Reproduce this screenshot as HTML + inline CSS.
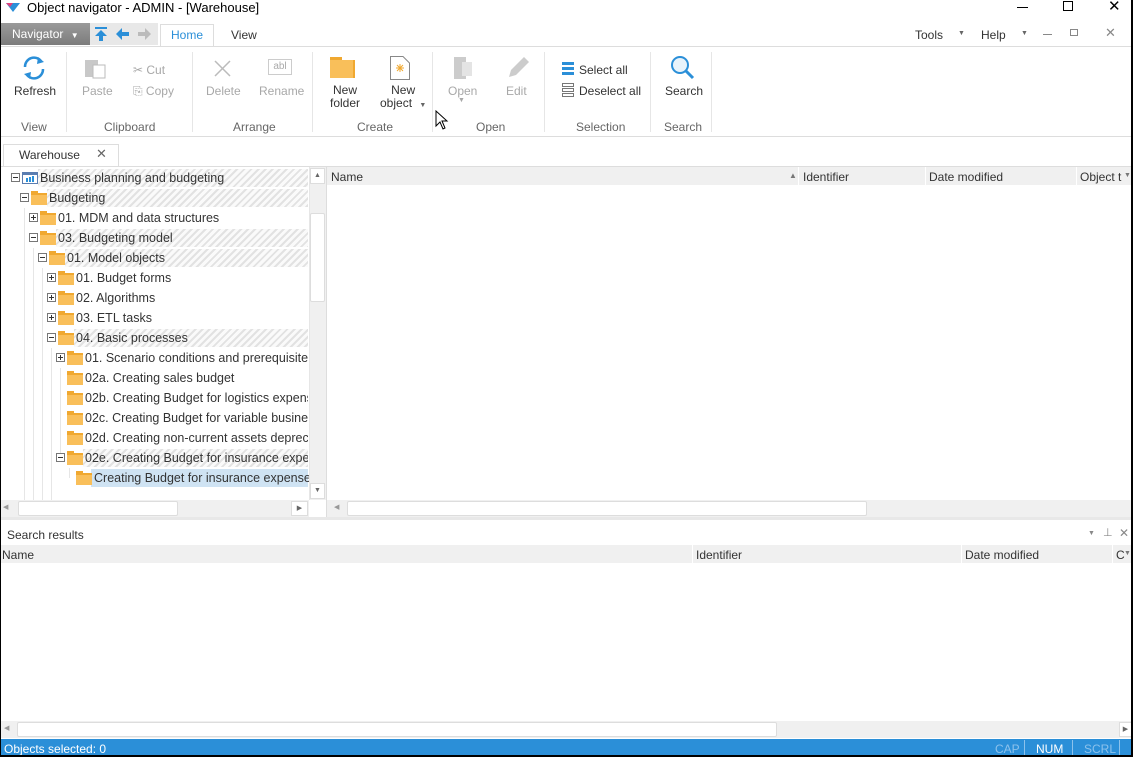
<!DOCTYPE html>
<html><head><meta charset="utf-8"><style>
*{margin:0;padding:0;box-sizing:border-box}
body{width:1133px;height:757px;overflow:hidden;background:#fff;font-family:"Liberation Sans",sans-serif;font-size:12px;color:#333;position:relative}
.a{position:absolute;white-space:nowrap}
.g{color:#a8a8a8}
.lbl{color:#666}
.hat{background:repeating-linear-gradient(135deg,#e2e2e2 0 2px,#fafafa 2px 5px)}
.exp{position:absolute;width:9px;height:9px;border:1px solid #777;background:#fff}
.exp:before{content:"";position:absolute;left:1px;top:3px;width:5px;height:1px;background:#333}
.exp.p:after{content:"";position:absolute;left:3px;top:1px;width:1px;height:5px;background:#333}
.fd{position:absolute;width:16px;height:12px;background:#f9bf5a;border-top:2px solid #f0a830}
.fd:before{content:"";position:absolute;left:0;top:-4px;width:7px;height:3px;background:#f0a830}
.vl{position:absolute;width:1px;background:#e6e6e6}
.tx{position:absolute;height:20px;line-height:20px;white-space:nowrap;overflow:hidden;font-size:12.5px}
</style></head><body>
<svg class="a" style="left:6px;top:3px" width="14" height="10"><path d="M0 0 L14 0 L7 9Z" fill="#2b8fd8"/><path d="M0 0 L7 0 L4 4Z" fill="#e0407a"/></svg>
<div class="a" style="left:27px;top:0;font-size:13px;color:#000;line-height:16px">Object navigator - ADMIN - [Warehouse]</div>
<div class="a" style="left:1017px;top:7px;width:11px;height:1px;background:#000"></div>
<div class="a" style="left:1063px;top:1px;width:10px;height:10px;border:1px solid #000"></div>
<div class="a" style="left:1108px;top:-3px;font-size:15px;color:#000">✕</div>
<div class="a" style="left:0;top:23px;width:90px;height:22px;background:linear-gradient(#9a9a9a,#7c7c7c);color:#fff;line-height:22px;padding-left:12px">Navigator <span style="font-size:8px;margin-left:4px">▼</span></div>
<div class="a" style="left:90px;top:23px;width:68px;height:22px;background:#e8e8e8"></div>
<svg class="a" style="left:94px;top:27px" width="60" height="14"><path d="M1 1H13" stroke="#2b8fd8" stroke-width="2"/><path d="M7 3L1 9H5V14H9V9H13Z" fill="#2b8fd8"/><path d="M22 7L28 1V5H35V9H28V13Z" fill="#2b8fd8"/><path d="M57 7L51 1V5H44V9H51V13Z" fill="#bbb"/></svg>
<div class="a" style="left:160px;top:24px;width:54px;height:23px;border:1px solid #ddd;border-bottom:none;background:#fff;color:#2b8fd8;text-align:center;line-height:21px">Home</div>
<div class="a" style="left:231px;top:28px;color:#333">View</div>
<div class="a" style="left:915px;top:28px">Tools</div><div class="a" style="left:958px;top:30px;font-size:7px;color:#666">▼</div>
<div class="a" style="left:981px;top:28px">Help</div><div class="a" style="left:1021px;top:30px;font-size:7px;color:#666">▼</div>
<div class="a" style="left:1043px;top:34px;width:9px;height:1px;background:#888"></div>
<div class="a" style="left:1070px;top:29px;width:8px;height:7px;border:1px solid #888"></div>
<div class="a" style="left:1105px;top:25px;color:#888;font-size:13px">✕</div>
<div class="a" style="left:0;top:46px;width:1133px;height:1px;background:#ddd"></div>
<div class="a" style="left:0;top:136px;width:1133px;height:1px;background:#ddd"></div>
<div class="a" style="left:66px;top:52px;width:1px;height:80px;background:#e6e6e6"></div>
<div class="a" style="left:192px;top:52px;width:1px;height:80px;background:#e6e6e6"></div>
<div class="a" style="left:312px;top:52px;width:1px;height:80px;background:#e6e6e6"></div>
<div class="a" style="left:432px;top:52px;width:1px;height:80px;background:#e6e6e6"></div>
<div class="a" style="left:544px;top:52px;width:1px;height:80px;background:#e6e6e6"></div>
<div class="a" style="left:650px;top:52px;width:1px;height:80px;background:#e6e6e6"></div>
<div class="a" style="left:711px;top:52px;width:1px;height:80px;background:#e6e6e6"></div>
<svg class="a" style="left:21px;top:55px" width="26" height="26"><path d="M4 12A9 9 0 0 1 20 6" fill="none" stroke="#2b8fd8" stroke-width="2.5"/><path d="M22 14A9 9 0 0 1 6 20" fill="none" stroke="#2b8fd8" stroke-width="2.5"/><path d="M17 2L23 7L16 9Z" fill="#2b8fd8"/><path d="M9 24L3 19L10 17Z" fill="#2b8fd8"/></svg>
<div class="a" style="left:14px;top:84px">Refresh</div>
<svg class="a" style="left:85px;top:57px" width="22" height="22"><rect x="0" y="3" width="13" height="17" fill="#c8c8c8"/><rect x="8" y="8" width="12" height="13" fill="#fff" stroke="#bbb"/></svg>
<div class="a g" style="left:82px;top:84px">Paste</div>
<div class="a g" style="left:133px;top:63px">✂ Cut</div>
<div class="a g" style="left:133px;top:84px">⎘ Copy</div>
<svg class="a" style="left:214px;top:60px" width="18" height="18"><path d="M1 1L16 16M16 1L1 16" stroke="#bbb" stroke-width="1.5"/></svg>
<div class="a g" style="left:206px;top:84px">Delete</div>
<div class="a" style="left:268px;top:59px;width:24px;height:16px;border:1px solid #ccc;color:#aaa;font-size:10px;text-align:center;line-height:14px">abl</div>
<div class="a g" style="left:259px;top:84px">Rename</div>
<svg class="a" style="left:330px;top:57px" width="26" height="22"><rect x="0" y="0" width="12" height="4" fill="#f0a830"/><rect x="0" y="3" width="25" height="18" fill="#f9bf5a"/><rect x="23" y="3" width="2" height="18" fill="#f0a830"/></svg>
<div class="a" style="left:330px;top:84px;color:#333;text-align:center;line-height:13px">New<br>folder</div>
<svg class="a" style="left:390px;top:56px" width="20" height="24"><path d="M0.5 0.5H13L19.5 7V23.5H0.5Z" fill="#fff" stroke="#888"/><path d="M7 9L13 15M13 9L7 15M10 8V16M6 12H14" stroke="#f0a830"/></svg>
<div class="a" style="left:380px;top:84px;color:#333;text-align:center;line-height:13px">New<br>object <span style="font-size:7px;color:#666;margin-left:4px">▼</span></div>
<svg class="a" style="left:452px;top:56px" width="22" height="24"><rect x="2" y="1" width="12" height="22" fill="#ccc"/><rect x="10" y="6" width="10" height="14" fill="#e4e4e4"/></svg>
<div class="a g" style="left:448px;top:84px">Open</div><div class="a g" style="left:458px;top:97px;font-size:7px">▼</div>
<svg class="a" style="left:505px;top:55px" width="26" height="26"><path d="M4 22L6 15L19 2L24 7L11 20Z" fill="#ccc"/></svg>
<div class="a g" style="left:506px;top:84px">Edit</div>
<svg class="a" style="left:562px;top:62px" width="12" height="36"><rect x="0" y="0" width="12" height="3" fill="#2b8fd8"/><rect x="0" y="5" width="12" height="3" fill="#2b8fd8"/><rect x="0" y="10" width="12" height="3" fill="#2b8fd8"/><rect x="0.5" y="21.5" width="11" height="3" fill="none" stroke="#777"/><rect x="0.5" y="26.5" width="11" height="3" fill="none" stroke="#777"/><rect x="0.5" y="31.5" width="11" height="3" fill="none" stroke="#777"/></svg>
<div class="a" style="left:579px;top:63px">Select all</div>
<div class="a" style="left:579px;top:84px">Deselect all</div>
<svg class="a" style="left:669px;top:55px" width="26" height="26"><circle cx="11" cy="10" r="8" fill="#e8f3fb" stroke="#2b8fd8" stroke-width="2"/><path d="M17 16L24 23" stroke="#2b8fd8" stroke-width="3"/></svg>
<div class="a" style="left:665px;top:84px">Search</div>
<div class="a lbl" style="left:21px;top:120px">View</div>
<div class="a lbl" style="left:104px;top:120px">Clipboard</div>
<div class="a lbl" style="left:233px;top:120px">Arrange</div>
<div class="a lbl" style="left:357px;top:120px">Create</div>
<div class="a lbl" style="left:476px;top:120px">Open</div>
<div class="a lbl" style="left:576px;top:120px">Selection</div>
<div class="a lbl" style="left:664px;top:120px">Search</div>
<svg class="a" style="left:435px;top:110px" width="14" height="20"><path d="M1 1V16L5 12L8 19L10 18L7 11H12Z" fill="#fff" stroke="#000"/></svg>
<div class="a" style="left:3px;top:144px;width:116px;height:23px;border:1px solid #ddd;border-bottom:none;background:#fff"></div>
<div class="a" style="left:19px;top:148px;color:#333">Warehouse</div>
<div class="a" style="left:96px;top:146px;color:#666;font-size:13px">✕</div>
<div class="a" style="left:0;top:166px;width:1133px;height:1px;background:#ddd"></div>
<div class="vl" style="left:24px;top:208px;height:295px"></div>
<div class="vl" style="left:33px;top:248px;height:255px"></div>
<div class="vl" style="left:42px;top:268px;height:235px"></div>
<div class="vl" style="left:51px;top:348px;height:155px"></div>
<div class="vl" style="left:60px;top:368px;height:85px"></div>
<div class="vl" style="left:69px;top:468px;height:10px"></div>
<div class="a hat" style="left:38px;top:169px;width:270px;height:18px"></div>
<div class="a hat" style="left:47px;top:189px;width:261px;height:18px"></div>
<div class="a hat" style="left:56px;top:229px;width:252px;height:18px"></div>
<div class="a hat" style="left:65px;top:249px;width:243px;height:18px"></div>
<div class="a hat" style="left:74px;top:329px;width:234px;height:18px"></div>
<div class="a hat" style="left:83px;top:449px;width:225px;height:18px"></div>
<div class="a" style="left:91px;top:469px;width:217px;height:18px;background:#cfe3f3"></div>
<div class="exp" style="left:11px;top:173px"></div>
<svg class="a" style="left:22px;top:172px" width="16" height="12"><rect x=".5" y=".5" width="15" height="11" fill="#fff" stroke="#5b7db0"/><rect x="1" y="1" width="14" height="2" fill="#5b7db0"/><rect x="4" y="6" width="2" height="4" fill="#2b8fd8"/><rect x="7" y="5" width="2" height="5" fill="#2b8fd8"/><rect x="10" y="4" width="2" height="6" fill="#2b8fd8"/></svg>
<div class="tx" style="left:40px;top:168px">Business planning and budgeting</div>
<div class="exp" style="left:20px;top:193px"></div><div class="fd" style="left:31px;top:193px"></div>
<div class="tx" style="left:49px;top:188px">Budgeting</div>
<div class="exp p" style="left:29px;top:213px"></div><div class="fd" style="left:40px;top:213px"></div>
<div class="tx" style="left:58px;top:208px">01. MDM and data structures</div>
<div class="exp" style="left:29px;top:233px"></div><div class="fd" style="left:40px;top:233px"></div>
<div class="tx" style="left:58px;top:228px">03. Budgeting model</div>
<div class="exp" style="left:38px;top:253px"></div><div class="fd" style="left:49px;top:253px"></div>
<div class="tx" style="left:67px;top:248px">01. Model objects</div>
<div class="exp p" style="left:47px;top:273px"></div><div class="fd" style="left:58px;top:273px"></div>
<div class="tx" style="left:76px;top:268px">01. Budget forms</div>
<div class="exp p" style="left:47px;top:293px"></div><div class="fd" style="left:58px;top:293px"></div>
<div class="tx" style="left:76px;top:288px">02. Algorithms</div>
<div class="exp p" style="left:47px;top:313px"></div><div class="fd" style="left:58px;top:313px"></div>
<div class="tx" style="left:76px;top:308px">03. ETL tasks</div>
<div class="exp" style="left:47px;top:333px"></div><div class="fd" style="left:58px;top:333px"></div>
<div class="tx" style="left:76px;top:328px">04. Basic processes</div>
<div class="exp p" style="left:56px;top:353px"></div><div class="fd" style="left:67px;top:353px"></div>
<div class="tx" style="left:85px;top:348px;width:223px">01. Scenario conditions and prerequisites</div>
<div class="fd" style="left:67px;top:373px"></div>
<div class="tx" style="left:85px;top:368px;width:223px">02a. Creating sales budget</div>
<div class="fd" style="left:67px;top:393px"></div>
<div class="tx" style="left:85px;top:388px;width:223px">02b. Creating Budget for logistics expenses</div>
<div class="fd" style="left:67px;top:413px"></div>
<div class="tx" style="left:85px;top:408px;width:223px">02c. Creating Budget for variable business expenses</div>
<div class="fd" style="left:67px;top:433px"></div>
<div class="tx" style="left:85px;top:428px;width:223px">02d. Creating non-current assets depreciation</div>
<div class="exp" style="left:56px;top:453px"></div><div class="fd" style="left:67px;top:453px"></div>
<div class="tx" style="left:85px;top:448px;width:223px">02e. Creating Budget for insurance expenses</div>
<div class="fd" style="left:76px;top:473px"></div>
<div class="tx" style="left:94px;top:468px">Creating Budget for insurance expenses</div>
<div class="a" style="left:309px;top:167px;width:17px;height:333px;background:#f0f0f0;border-left:1px solid #e6e6e6"></div>
<div class="a" style="left:310px;top:168px;width:15px;height:16px;background:#fff;border:1px solid #ddd;font-size:7px;text-align:center;line-height:14px;color:#666">▲</div>
<div class="a" style="left:310px;top:213px;width:15px;height:89px;background:#fff;border:1px solid #ddd;border-radius:2px"></div>
<div class="a" style="left:310px;top:483px;width:15px;height:16px;background:#fff;border:1px solid #ddd;font-size:7px;text-align:center;line-height:14px;color:#666">▼</div>
<div class="a" style="left:0;top:500px;width:309px;height:17px;background:#f0f0f0"></div>
<div class="a" style="left:3px;top:503px;font-size:7px;color:#999">◀</div>
<div class="a" style="left:18px;top:501px;width:160px;height:15px;background:#fff;border:1px solid #ddd;border-radius:2px"></div>
<div class="a" style="left:291px;top:501px;width:17px;height:15px;background:#fff;border:1px solid #ddd;font-size:7px;text-align:center;line-height:13px;color:#666">▶</div>
<div class="a" style="left:326px;top:167px;width:1px;height:350px;background:#ddd"></div>
<div class="a" style="left:327px;top:167px;width:806px;height:18px;background:#f0f0f0"></div>
<div class="a" style="left:331px;top:170px">Name</div>
<div class="a" style="left:789px;top:171px;font-size:8px;color:#777">▲</div>
<div class="a" style="left:798px;top:167px;width:1px;height:18px;background:#fff"></div>
<div class="a" style="left:803px;top:170px">Identifier</div>
<div class="a" style="left:925px;top:167px;width:1px;height:18px;background:#fff"></div>
<div class="a" style="left:929px;top:170px">Date modified</div>
<div class="a" style="left:1076px;top:167px;width:1px;height:18px;background:#fff"></div>
<div class="a" style="left:1080px;top:170px">Object t</div>
<div class="a" style="left:1124px;top:172px;font-size:7px;color:#777">▼</div>
<div class="a" style="left:327px;top:500px;width:806px;height:17px;background:#f0f0f0"></div>
<div class="a" style="left:334px;top:503px;font-size:7px;color:#999">◀</div>
<div class="a" style="left:347px;top:501px;width:520px;height:15px;background:#fff;border:1px solid #ddd;border-radius:2px"></div>
<div class="a" style="left:0;top:517px;width:1133px;height:3px;background:#e8e8e8"></div>
<div class="a" style="left:7px;top:528px">Search results</div>
<div class="a" style="left:1088px;top:530px;font-size:7px;color:#888">▼</div>
<div class="a" style="left:1103px;top:526px;font-size:11px;color:#888">⊥</div>
<div class="a" style="left:1119px;top:526px;font-size:12px;color:#888">✕</div>
<div class="a" style="left:0;top:545px;width:1133px;height:18px;background:#f0f0f0"></div>
<div class="a" style="left:2px;top:548px">Name</div>
<div class="a" style="left:692px;top:545px;width:1px;height:18px;background:#fff"></div>
<div class="a" style="left:696px;top:548px">Identifier</div>
<div class="a" style="left:961px;top:545px;width:1px;height:18px;background:#fff"></div>
<div class="a" style="left:965px;top:548px">Date modified</div>
<div class="a" style="left:1112px;top:545px;width:1px;height:18px;background:#fff"></div>
<div class="a" style="left:1116px;top:548px">C</div>
<div class="a" style="left:1124px;top:550px;font-size:7px;color:#777">▼</div>
<div class="a" style="left:0;top:721px;width:1133px;height:17px;background:#f0f0f0"></div>
<div class="a" style="left:4px;top:724px;font-size:7px;color:#999">◀</div>
<div class="a" style="left:17px;top:722px;width:760px;height:15px;background:#fff;border:1px solid #ddd;border-radius:2px"></div>
<div class="a" style="left:1119px;top:722px;width:13px;height:15px;background:#fff;border:1px solid #ddd;font-size:7px;text-align:center;line-height:13px;color:#666">▶</div>
<div class="a" style="left:0;top:739px;width:1133px;height:18px;background:#2b8fd8"></div>
<div class="a" style="left:4px;top:742px;color:#fff">Objects selected: 0</div>
<div class="a" style="left:995px;top:742px;color:#8cc2ec">CAP</div>
<div class="a" style="left:1024px;top:740px;width:1px;height:16px;background:#8cc2ec"></div>
<div class="a" style="left:1036px;top:742px;color:#fff">NUM</div>
<div class="a" style="left:1072px;top:740px;width:1px;height:16px;background:#8cc2ec"></div>
<div class="a" style="left:1084px;top:742px;color:#8cc2ec">SCRL</div>
<div class="a" style="left:1119px;top:740px;width:1px;height:16px;background:#8cc2ec"></div>
<div class="a" style="left:1131px;top:0;width:2px;height:757px;background:#000"></div>
<div class="a" style="left:0;top:755px;width:1133px;height:2px;background:#000"></div>
<div class="a" style="left:0;top:0;width:1px;height:757px;background:#000"></div>
</body></html>
